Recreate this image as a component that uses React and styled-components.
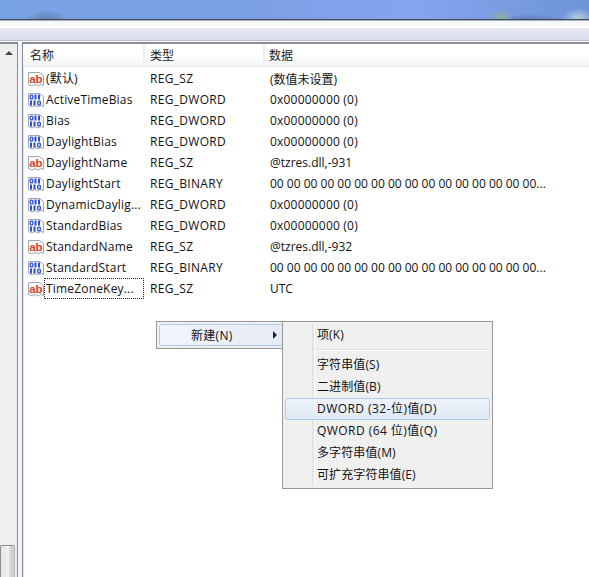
import React from 'react';
import styled, { createGlobalStyle } from 'styled-components';

const Global = createGlobalStyle`
  html, body { margin: 0; padding: 0; background: #fff; overflow: hidden; }
  * { box-sizing: border-box; }
  #root { width: 589px; height: 577px; }
`;
const Page = styled.div`
  width: 589px; height: 577px; display: flex; flex-direction: column; position: relative;
  font-family: "Open Sans", "Noto Sans CJK SC", sans-serif; font-size: 12px; color: #111; overflow: hidden;
`;
const Desktop = styled.div`
  height: 20px; flex: none;
  background:
    radial-gradient(ellipse 22px 10px at 47px 20px, #5f7fa8, transparent),
    radial-gradient(ellipse 12px 8px at 501px 17px, #8fb09a, transparent),
    radial-gradient(ellipse 30px 6px at 530px 20px, #5d78b0, transparent),
    radial-gradient(ellipse 16px 10px at 578px 18px, #b4d0d8, transparent),
    linear-gradient(90deg, #78a2e6, #7c9fe6 45%, #85a5ee 70%, #6e93d8);
  border-bottom: 1px solid #3f4a5c;
  box-shadow: 0 1px 0 #aab0ba;
`;
const TitleGap = styled.div`
  height: 7px; flex: none; margin-top: 1px; background: linear-gradient(#f4f5f8, #ffffff);
`;
const Toolbar = styled.div`
  height: 13px; flex: none; background: linear-gradient(#e6e9f3, #d7dbeb);
  border-bottom: 1px solid #b8bcc8;
`;
const Body = styled.div`
  flex: 1; display: flex; min-height: 0; border-top: 1px solid #fff; margin-top: 1px;
`;
const TreeScroll = styled.div`
  width: 18px; flex: none; position: relative; margin-top: -1px; border-top: 2px solid #868a94;
  border-right: 1px solid #8a9098;
  background: #eef0f0; display: flex; flex-direction: column; justify-content: space-between;
`;
const ArrowUp = styled.div`
  margin: 7px 0 0 5px; width: 0; height: 0;
  border-left: 4px solid transparent; border-right: 4px solid transparent; border-bottom: 4px solid #444;
`;
const Thumb = styled.div`
  height: 32px; width: 15px; border: 1px solid #8e8e8e; border-right-color: #b4b4b4; border-bottom: none;
  border-radius: 2px 2px 0 0; background: linear-gradient(90deg, #e6e6e6, #f0f0f0 55%, #c8c8cc 85%, #d8d8d8);
`;
const Splitter = styled.div`
  width: 4px; flex: none; background: #f2f4f7;
`;
const ListPane = styled.div`
  flex: 1; border-left: 1px solid #7f8a96; margin-top: -1px; border-top: 2px solid #868a94;
  box-shadow: inset 1px 0 0 #e2e6ea; display: flex; flex-direction: column; background: #fff;
`;
const Header = styled.div`
  height: 23px; flex: none; display: flex; background: linear-gradient(#fff 50%, #f3f4f6);
  border-bottom: 1px solid #e6e8eb; padding-left: 1px; margin-bottom: 1px;
`;
const HeaderCell = styled.div`
  width: ${p => p.$w}px; flex: none; padding-left: ${p => p.$pad}px; line-height: 23px; color: #222;
  border-right: ${p => (p.$last ? 'none' : '2px solid #eceef0')}; font-size: 12px;
`;
const Rows = styled.div`
  display: flex; flex-direction: column; padding-left: 4px;
`;
const Row = styled.div`
  height: 21px; display: flex; align-items: center;
`;
const IconSlot = styled.div`
  width: 18px; height: 18px; flex: none; display: flex; align-items: center; justify-content: center;
`;
const NameCell = styled.div`
  width: 100px; flex: none; height: 21px; line-height: 19px; padding-left: 1px; white-space: nowrap;
  letter-spacing: 0.18px;
  margin-left: -1px; border: 1px ${p => (p.$focus ? 'dotted #222' : 'solid transparent')};
`;
const TypeCell = styled.div`
  width: 120px; flex: none; padding-left: 6px; white-space: nowrap; letter-spacing: 0.3px;
`;
const DataCell = styled.div`
  padding-left: 6px; white-space: nowrap; letter-spacing: ${p => (p.$spaced ? '0.2px' : '0')};
`;
const Overlay = styled.div`
  position: absolute; background: #f0f0f0; border: 1px solid #979797;
`;
const ParentMenu = styled(Overlay)`
  left: 156px; top: 321px; width: 127px; height: 28px; padding: 2px 0 2px 2px;
`;
const ParentItem = styled.div`
  height: 22px; display: flex; align-items: center; padding-left: 31px; position: relative;
  border: 1px solid #aeccf2; border-right: none; border-radius: 3px 0 0 3px;
  background: linear-gradient(90deg, #f0f5fb, #e6ecf6);
  letter-spacing: 0.3px;
`;
const Caret = styled.div`
  position: absolute; right: 5px; top: 6px; width: 0; height: 0;
  border-top: 4px solid transparent; border-bottom: 4px solid transparent; border-left: 4px solid #222;
`;
const SubMenu = styled(Overlay)`
  left: 282px; top: 321px; width: 211px; height: 168px; padding: 2px;
  display: flex; flex-direction: column;
`;
const Gutter = styled.div`
  position: absolute; left: 29px; top: 2px; bottom: 2px; width: 2px;
  background: #e2e3e3; box-shadow: 1px 0 0 #fff;
`;
const MenuItem = styled.div`
  height: 22px; flex: none; display: flex; align-items: center; padding-left: ${p => (p.$active ? 31 : 32)}px;
  padding-bottom: 2px;
  position: relative; white-space: nowrap;
  letter-spacing: ${p => (p.$wide ? '0.45px' : '0.1px')};
  ${p => p.$active && `
    border: 1px solid #aeccf2; border-radius: 3px;
    background: linear-gradient(#eef3fa, #dfe8f4);
  `}
`;
const Sep = styled.div`
  height: 2px; flex: none; margin: 3px 0 3px 30px; background: #e0e0e0; border-bottom: 1px solid #fff;
`;

const DocBase = ({ children }) => (
  <svg width="18" height="18" viewBox="0 0 18 18">
    <path d="M1.500 2.500h11l4 3v10l-2.500-1-3 1.500-3-1.500-3 1.500-3.500-1.500z" fill="#f8f8fa" stroke="#a4a6ac" strokeWidth="1" />
    {children}
  </svg>
);
const StringIcon = () => (
  <DocBase>
    <text x="2.200" y="12.500" fontFamily="Liberation Sans, sans-serif" fontWeight="700" fontSize="11.500" fill="#d9462a">ab</text>
  </DocBase>
);
const Zero = ({ x, y }) => (
  <rect x={x + 0.7} y={y + 0.6} width="2.600" height="3.800" rx="1" fill="none" stroke="#2b4fd0" strokeWidth="1.300" />
);
const One = ({ x, y }) => <rect x={x + 1} y={y} width="2" height="5" fill="#2b4fd0" />;
const BinaryIcon = () => (
  <DocBase>
    <Zero x={2.500} y={3.500} />
    <One x={6.500} y={3.500} />
    <One x={10} y={3.500} />
    <One x={2} y={9.500} />
    <One x={5.500} y={9.500} />
    <Zero x={10} y={9.500} />
  </DocBase>
);

const hex = '00 00 00 00 00 00 00 00 00 00 00 00 00 00 00 00...';
const rows = [
  ['s', '(默认)', 'REG_SZ', '(数值未设置)'],
  ['b', 'ActiveTimeBias', 'REG_DWORD', '0x00000000 (0)'],
  ['b', 'Bias', 'REG_DWORD', '0x00000000 (0)'],
  ['b', 'DaylightBias', 'REG_DWORD', '0x00000000 (0)'],
  ['s', 'DaylightName', 'REG_SZ', '@tzres.dll,-931'],
  ['b', 'DaylightStart', 'REG_BINARY', hex],
  ['b', 'DynamicDaylig...', 'REG_DWORD', '0x00000000 (0)'],
  ['b', 'StandardBias', 'REG_DWORD', '0x00000000 (0)'],
  ['s', 'StandardName', 'REG_SZ', '@tzres.dll,-932'],
  ['b', 'StandardStart', 'REG_BINARY', hex],
  ['s', 'TimeZoneKey...', 'REG_SZ', 'UTC', true],
];

export default function App() {
  return (
    <Page>
      <Global />
      <Desktop />
      <TitleGap />
      <Toolbar />
      <Body>
        <TreeScroll>
          <ArrowUp />
          <Thumb />
        </TreeScroll>
        <Splitter />
        <ListPane>
          <Header>
            <HeaderCell $w={121} $pad={6}>名称</HeaderCell>
            <HeaderCell $w={120} $pad={5}>类型</HeaderCell>
            <HeaderCell $w={320} $pad={4} $last>数据</HeaderCell>
          </Header>
          <Rows>
            {rows.map(([kind, name, type, data, focus]) => (
              <Row key={name}>
                <IconSlot>{kind === 's' ? <StringIcon /> : <BinaryIcon />}</IconSlot>
                <NameCell $focus={focus}>{name}</NameCell>
                <TypeCell>{type}</TypeCell>
                <DataCell $spaced={data.startsWith('0x')}>{data}</DataCell>
              </Row>
            ))}
          </Rows>
        </ListPane>
      </Body>
      <ParentMenu>
        <ParentItem>
          新建(N)
          <Caret />
        </ParentItem>
      </ParentMenu>
      <SubMenu>
        <Gutter />
        <MenuItem>项(K)</MenuItem>
        <Sep />
        <MenuItem>字符串值(S)</MenuItem>
        <MenuItem>二进制值(B)</MenuItem>
        <MenuItem $active $wide>DWORD (32-位)值(D)</MenuItem>
        <MenuItem $wide>QWORD (64 位)值(Q)</MenuItem>
        <MenuItem>多字符串值(M)</MenuItem>
        <MenuItem>可扩充字符串值(E)</MenuItem>
      </SubMenu>
    </Page>
  );
}
